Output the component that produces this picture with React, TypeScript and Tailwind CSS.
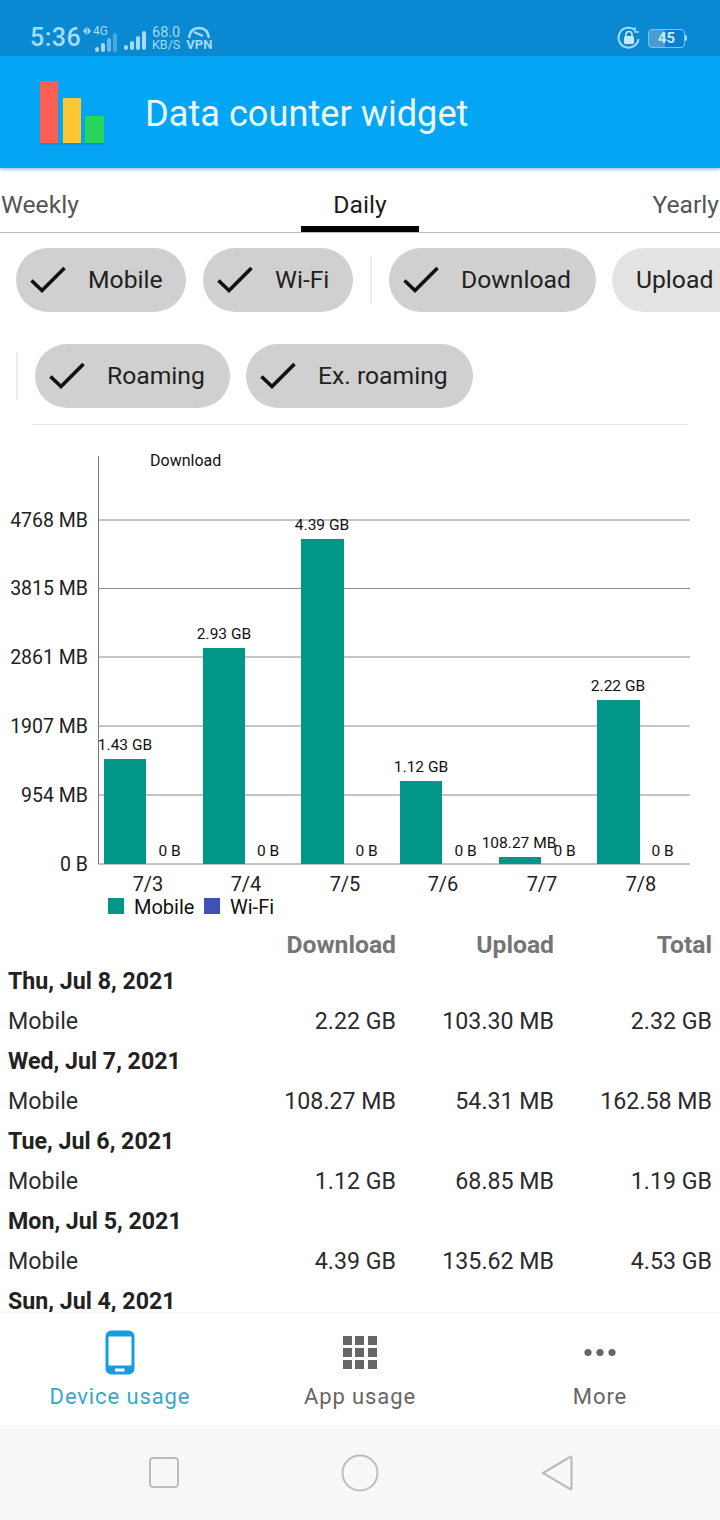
import React from 'react'

const bars = [
    { x: 104, w: 42, top: 759, value: '1.43 GB', vx: 125, date: '7/3', dx: 148, zero: 169.5 },
    { x: 203, w: 42, top: 648, value: '2.93 GB', vx: 224, date: '7/4', dx: 246, zero: 268 },
    { x: 301, w: 43, top: 539, value: '4.39 GB', vx: 322, date: '7/5', dx: 345, zero: 366.5 },
    { x: 400, w: 42, top: 781, value: '1.12 GB', vx: 421, date: '7/6', dx: 443, zero: 465.5 },
    { x: 499, w: 42, top: 857, value: '108.27 MB', vx: 519, date: '7/7', dx: 542, zero: 564.5 },
    { x: 597, w: 43, top: 700, value: '2.22 GB', vx: 618, date: '7/8', dx: 641, zero: 662.5 },
]

const gridLines = [
    { y: 520, label: '4768 MB' },
    { y: 588.5, label: '3815 MB' },
    { y: 657, label: '2861 MB' },
    { y: 726, label: '1907 MB' },
    { y: 795, label: '954 MB' },
    { y: 864, label: '0 B' },
]

const rows = [
    { day: 'Thu, Jul 8, 2021', down: '2.22 GB', up: '103.30 MB', total: '2.32 GB' },
    { day: 'Wed, Jul 7, 2021', down: '108.27 MB', up: '54.31 MB', total: '162.58 MB' },
    { day: 'Tue, Jul 6, 2021', down: '1.12 GB', up: '68.85 MB', total: '1.19 GB' },
    { day: 'Mon, Jul 5, 2021', down: '4.39 GB', up: '135.62 MB', total: '4.53 GB' },
]

const Tick = () => (
    <svg className="w-[36px] h-[30px] mr-[22px] shrink-0" viewBox="0 0 36 30" fill="none">
        <path d="M1.5 15.5L12 25.5L34.5 3" stroke="#111" strokeWidth="3.6" />
    </svg>
)

const Chip = ({ label, className }: { label: string; className: string }) => (
    <div className={`flex items-center h-16 rounded-full pl-[14px] shrink-0 text-[24.7px] text-[#222] ${className}`}>
        <Tick />
        <span>{label}</span>
    </div>
)

const Signal = ({ dim }: { dim?: boolean }) => (
    <svg width="23" height="19" viewBox="0 0 23 19" fill="#a5dcf5">
        <rect x="0" y="14" width="4" height="5" rx="2" />
        <rect x="6" y="10" width="4" height="9" rx="2" />
        <rect x="12" y="5" width="4" height="14" rx="2" opacity={dim ? 0.6 : 1} />
        <rect x="18" y="0" width="4" height="19" rx="2" opacity={dim ? 0.4 : 1} />
    </svg>
)

const StatusBar = () => (
    <div className="h-14 shrink-0 bg-[#0a88d2] flex items-center justify-between pl-[30px] pr-[33px] pt-5 text-[#a5dcf5]">
        <div className="flex items-center">
            <span className="text-[25px] font-medium tracking-[0.5px] w-[53px]">5:36</span>
            <div className="flex flex-col items-end w-[35px] h-[24px]">
                <div className="flex items-center h-[10px] w-full">
                    <svg width="8" height="8" viewBox="0 0 8 8" fill="#a5dcf5">
                        <path d="M3.5 0V8L0 4Z" />
                        <path d="M4.5 0V8L8 4Z" />
                    </svg>
                    <span className="ml-[2px] text-[12px] leading-none">4G</span>
                </div>
                <div className="-mt-[3px]"><Signal dim /></div>
            </div>
            <div className="ml-[6px] mt-[4px]"><Signal /></div>
            <div className="ml-[5px] flex flex-col text-[#a5dcf5]">
                <span className="text-[14.5px] leading-[13px]">68.0</span>
                <span className="text-[12.5px] leading-[12px]">KB/S</span>
            </div>
            <div className="ml-[6px] flex flex-col items-center">
                <svg width="24" height="13" viewBox="0 0 24 13" fill="none" stroke="#a5dcf5" strokeWidth="2.4">
                    <path d="M2 12C3 5 7 2 12 2S21 5 22 12" />
                    <path d="M7 6L16 10" />
                </svg>
                <span className="text-[13px] leading-[12px] font-bold">VPN</span>
            </div>
        </div>
        <div className="flex items-center">
            <svg width="24" height="24" viewBox="0 0 24 24" fill="none">
                <path d="M21.5 13A10 10 0 1 1 18 4" stroke="#a5dcf5" strokeWidth="2" />
                <path d="M18 1V6H22" stroke="#a5dcf5" strokeWidth="1.4" />
                <rect x="7" y="10" width="10" height="8" rx="1.5" fill="#c7e9f8" />
                <path d="M9 10V8.5A3 3 0 0 1 15 8.5V10" stroke="#c7e9f8" strokeWidth="1.6" />
            </svg>
            <div className="ml-[7px] w-[37px] h-[19px] rounded-[4px] border border-[#6fc8ee] bg-[linear-gradient(90deg,#4a9ad4_45%,#0a7fce_45%)] flex items-center justify-center text-[15px] font-bold text-[#c7e9f8]">
                45
            </div>
            <div className="w-[2px] h-[6px] bg-[#a5dcf5] rounded-r-sm" />
        </div>
    </div>
)

const AppBar = () => (
    <div className="h-[112px] shrink-0 bg-[#03a5f4] flex items-center pl-[40px] shadow-[0_2px_3px_rgba(0,100,160,0.35)] z-10">
        <svg className="w-[66px] h-[66px] shrink-0 mt-[3px]" viewBox="0 0 66 66">
            <rect x="0" y="0" width="18" height="62" fill="#fa5f52" />
            <rect x="23" y="17" width="18" height="45" fill="#fdc733" />
            <rect x="45" y="35" width="19" height="27" fill="#27d45e" />
            <rect x="0" y="62" width="64" height="2" fill="#0b7fbe" opacity="0.45" />
        </svg>
        <span className="ml-[39px] mt-[5px] text-[36.2px] text-[#eafaff] leading-none">Data counter widget</span>
    </div>
)

const Tabs = () => (
    <div className="h-[65px] shrink-0 grid grid-cols-[301px_118px_301px] text-[24.7px] border-b border-[#bbb]">
        <div className="pl-px pt-[18px] text-[#555]">Weekly</div>
        <div className="pt-[18px] text-center text-[#1c1c1c] border-b-[6px] border-black">Daily</div>
        <div className="pr-px pt-[18px] text-right text-[#555]">Yearly</div>
    </div>
)

const Filters = () => (
    <div className="shrink-0 overflow-hidden">
        <div className="flex items-center pl-4 pt-[15px] w-[800px]">
            <Chip label="Mobile" className="w-[170px] bg-[#d0d0d0]" />
            <Chip label="Wi-Fi" className="w-[150px] ml-[17px] bg-[#d0d0d0]" />
            <div className="w-0.5 h-12 bg-[#eee] ml-[17px]" />
            <Chip label="Download" className="w-[207px] ml-[17px] bg-[#d0d0d0]" />
            <div className="flex items-center h-16 w-[140px] ml-4 pl-6 rounded-full bg-[#e3e3e3] text-[24.7px] text-[#222] shrink-0">Upload</div>
        </div>
        <div className="flex items-center pl-4 mt-8">
            <div className="w-0.5 h-12 bg-[#eee]" />
            <Chip label="Roaming" className="w-[195px] ml-[17px] bg-[#d0d0d0]" />
            <Chip label="Ex. roaming" className="w-[227px] ml-4 bg-[#d0d0d0]" />
        </div>
        <div className="h-px bg-[#e8e8e8] mx-8 mt-4" />
    </div>
)

const Chart = () => (
    <svg className="w-[720px] h-[500px] shrink-0" viewBox="0 425 720 500" fontFamily="Roboto, sans-serif">
        <text x="150" y="466" fontSize="16" fill="#111">Download</text>
        <line x1="98.5" y1="456" x2="98.5" y2="864" stroke="#777" />
        {gridLines.map((g) => (
            <g key={g.label}>
                <line x1="98" y1={g.y} x2="690" y2={g.y} stroke="#8a8a8a" />
                <text x="88" y={g.y + 6.5} fontSize="19.5" fill="#222" textAnchor="end">{g.label}</text>
            </g>
        ))}
        {bars.map((b) => (
            <g key={b.date}>
                <rect x={b.x} y={b.top} width={b.w} height={864 - b.top} fill="#009688" />
                <text x={b.vx} y={b.top - 9} fontSize="15.5" fill="#111" textAnchor="middle">{b.value}</text>
                <text x={b.zero} y="856" fontSize="15.5" fill="#111" textAnchor="middle">0 B</text>
                <text x={b.dx} y="891" fontSize="20" fill="#222" textAnchor="middle">{b.date}</text>
            </g>
        ))}
        <rect x="108" y="898" width="16" height="16" fill="#009688" />
        <text x="134" y="914" fontSize="20" fill="#111">Mobile</text>
        <rect x="204" y="898" width="16" height="16" fill="#3f51b5" />
        <text x="230" y="914" fontSize="20" fill="#111">Wi-Fi</text>
    </svg>
)

const Table = () => (
    <div className="h-[387px] shrink-0 overflow-hidden px-2 text-[23.2px] text-[#2b2b2b]">
        <div className="grid grid-cols-[230px_158px_158px_158px] h-9 pt-1 items-center text-right text-[24.7px] leading-none font-bold text-[#757575]">
            <span />
            <span>Download</span>
            <span>Upload</span>
            <span>Total</span>
        </div>
        {rows.map((r) => (
            <div key={r.day}>
                <div className="h-10 flex items-center font-bold text-[#222]">{r.day}</div>
                <div className="grid grid-cols-[230px_158px_158px_158px] h-10 items-center text-right">
                    <span className="text-left">Mobile</span>
                    <span>{r.down}</span>
                    <span>{r.up}</span>
                    <span>{r.total}</span>
                </div>
            </div>
        ))}
        <div className="h-10 flex items-center font-bold text-[#222]">Sun, Jul 4, 2021</div>
    </div>
)

const BottomNav = () => (
    <div className="h-[113px] shrink-0 grid grid-cols-3 border-t border-[#f2f2f2] bg-white text-[22px] tracking-[0.9px]">
        <div className="flex flex-col items-center pt-[17px]">
            <svg width="30" height="45" viewBox="0 0 30 45" fill="none">
                <rect x="0.5" y="0.5" width="29" height="44" rx="6" fill="#1a9cdc" />
                <rect x="3.5" y="6.5" width="23" height="29" rx="1" fill="#fff" />
                <rect x="10" y="38.5" width="9.5" height="3" fill="#fff" />
            </svg>
            <span className="text-[#35a9c6] leading-none mt-[11px]">Device usage</span>
        </div>
        <div className="flex flex-col items-center pt-[23px]">
            <svg width="34" height="33" viewBox="0 0 34 33" fill="#666">
                <rect x="0" y="0" width="9" height="9" />
                <rect x="12" y="0" width="9" height="9" />
                <rect x="25" y="0" width="9" height="9" />
                <rect x="0" y="12" width="9" height="9" />
                <rect x="12" y="12" width="9" height="9" />
                <rect x="25" y="12" width="9" height="9" />
                <rect x="0" y="24" width="9" height="9" />
                <rect x="12" y="24" width="9" height="9" />
                <rect x="25" y="24" width="9" height="9" />
            </svg>
            <span className="text-[#666] leading-none mt-[17px]">App usage</span>
        </div>
        <div className="flex flex-col items-center pt-[23px]">
            <svg width="34" height="33" viewBox="0 0 34 33" fill="#666">
                <circle cx="5" cy="16.5" r="3.6" />
                <circle cx="17" cy="16.5" r="3.6" />
                <circle cx="29" cy="16.5" r="3.6" />
            </svg>
            <span className="text-[#666] leading-none mt-[17px]">More</span>
        </div>
    </div>
)

const SystemNav = () => (
    <div className="flex-1 bg-[#f8f8f8] flex justify-center items-center gap-[162px] pl-[2px]">
        <svg width="30" height="31" viewBox="0 0 30 31" fill="none" stroke="#bdbdbd" strokeWidth="2">
            <rect x="1" y="1" width="28" height="29" rx="3" />
        </svg>
        <svg width="38" height="38" viewBox="0 0 38 38" fill="none" stroke="#bdbdbd" strokeWidth="2">
            <circle cx="19" cy="19" r="17.5" />
        </svg>
        <svg width="32" height="36" viewBox="0 0 32 36" fill="none" stroke="#bdbdbd" strokeWidth="2.2" strokeLinejoin="round">
            <path d="M2 18L29 2C30 1.5 30.5 2 30.5 3V33C30.5 34 30 34.5 29 34Z" />
        </svg>
    </div>
)

const App = () => {
    return (
        <div className="w-[720px] h-[1520px] flex flex-col overflow-hidden bg-white font-['Roboto',sans-serif]">
            <StatusBar />
            <AppBar />
            <Tabs />
            <Filters />
            <Chart />
            <Table />
            <BottomNav />
            <SystemNav />
        </div>
    )
}

export default App
